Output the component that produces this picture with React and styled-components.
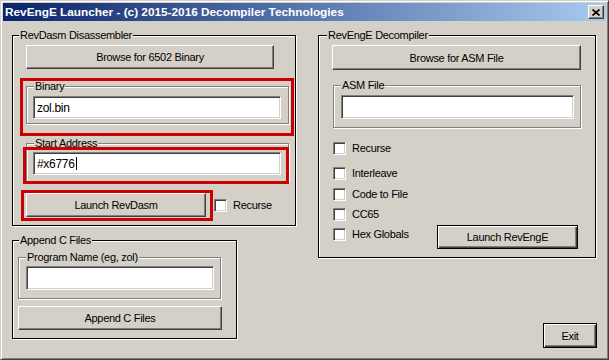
import React from 'react';
import styled, { createGlobalStyle } from 'styled-components';

const GlobalStyle = createGlobalStyle`
  html, body {
    margin: 0;
    padding: 0;
    background: #d4d0c8;
  }
  body {
    font-family: "Liberation Sans", Arial, sans-serif;
    font-size: 11px;
    letter-spacing: -0.3px;
    color: #000;
  }
`;

const Window = styled.div`
  box-sizing: border-box;
  width: 609px;
  height: 360px;
  padding: 2px;
  background: #d4d0c8;
  border: 1px solid;
  border-color: #d4d0c8 #404040 #404040 #d4d0c8;
  box-shadow: inset 1px 1px #fff, inset -1px -1px #808080;
  display: flex;
  flex-direction: column;
`;

const TitleBar = styled.div`
  height: 18px;
  padding: 0 2px;
  display: flex;
  align-items: center;
  justify-content: space-between;
  background: linear-gradient(to right, #0a246a, #a6caf0);
  color: #fff;
  font-size: 11.8px;
  font-weight: bold;
  letter-spacing: 0;
`;

const CloseButton = styled.div`
  box-sizing: border-box;
  width: 16px;
  height: 14px;
  display: flex;
  align-items: center;
  justify-content: center;
  background: #d4d0c8;
  border: 1px solid;
  border-color: #fff #404040 #404040 #fff;
  box-shadow: inset -1px -1px #808080;
`;

const Body = styled.div`
  flex: 1;
  display: flex;
  padding: 8px 0 0 9px;
  gap: 22px;
`;

const Column = styled.div`
  display: flex;
  flex-direction: column;
  align-items: flex-start;
  width: ${p => p.$w}px;
`;

const Group = styled.fieldset`
  box-sizing: border-box;
  margin: ${p => p.$m || '0'};
  padding: 0;
  min-width: 0;
  width: ${p => p.$w}px;
  height: ${p => p.$h}px;
  border: 1px solid ${p => (p.$inner ? '#808080' : '#000')};
  box-shadow: inset 1px 1px #fff, 1px 1px #fff;
  display: flex;
  flex-direction: column;
  align-items: flex-start;
`;

const Legend = styled.legend`
  margin-left: ${p => p.$x}px;
  padding: 0 1px;
  height: ${p => p.$lh}px;
  line-height: ${p => p.$lh}px;
  background: #d4d0c8;
`;

const Button = styled.button`
  box-sizing: border-box;
  margin: ${p => p.$m || '0'};
  padding: 0;
  width: ${p => p.$w}px;
  height: ${p => p.$h || 24}px;
  font: inherit;
  letter-spacing: inherit;
  color: #000;
  background: #d4d0c8;
  border: 1px solid;
  border-color: ${p => (p.$default ? '#000' : '#fff #404040 #404040 #fff')};
  box-shadow: ${p =>
    p.$default
      ? 'inset 1px 1px #fff, inset -1px -1px #404040, inset -2px -2px #808080'
      : 'inset -1px -1px #808080'};
`;

const Field = styled.div`
  box-sizing: border-box;
  margin: ${p => p.$m || '0'};
  width: ${p => p.$w}px;
  height: ${p => p.$h || 23}px;
  padding: 0 3px;
  display: flex;
  align-items: center;
  background: #fff;
  border: 1px solid;
  border-color: #808080 #fff #fff #808080;
  box-shadow: inset 1px 1px #404040, inset -1px -1px #d4d0c8;
  font-size: 12px;
`;

const Caret = styled.span`
  display: inline-block;
  width: 1px;
  height: 13px;
  margin-left: 1px;
  background: #000;
`;

const Highlight = styled.div`
  box-sizing: border-box;
  margin: ${p => p.$m || '0'};
  width: ${p => p.$w}px;
  height: ${p => p.$h}px;
  border: 3px solid #cc0000;
  display: flex;
  flex-direction: column;
  align-items: flex-start;
`;

const Row = styled.div`
  display: flex;
  align-items: ${p => p.$align || 'center'};
  margin: ${p => p.$m || '0'};
  width: ${p => (p.$w ? `${p.$w}px` : 'auto')};
`;

const CheckBox = styled.span`
  box-sizing: border-box;
  flex: none;
  width: 13px;
  height: 13px;
  margin: ${p => p.$m || '0'};
  background: #fff;
  border: 1px solid;
  border-color: #808080 #fff #fff #808080;
  box-shadow: inset 1px 1px #404040, inset -1px -1px #d4d0c8;
`;

const CheckLabel = styled.span`
  margin: ${p => p.$m || '0 0 0 6px'};
  line-height: 13px;
`;

const Check = ({ label, m }) => (
  <Row $m={m}>
    <CheckBox />
    <CheckLabel>{label}</CheckLabel>
  </Row>
);

export default function App() {
  return (
    <Window>
      <GlobalStyle />
      <TitleBar>
        <span>RevEngE Launcher - (c) 2015-2016 Decompiler Technologies</span>
        <CloseButton>
          <svg width="8" height="7" viewBox="0 0 8 7">
            <path d="M0.5 0.5 L7.5 6.5 M7.5 0.5 L0.5 6.5" stroke="#000" strokeWidth="1.6" />
          </svg>
        </CloseButton>
      </TitleBar>
      <Body>
        <Column $w={284}>
          <Group $w={284} $h={197}>
            <Legend $x={6} $lh={13}>RevDasm Disassembler</Legend>
            <Button $w={248} $m="3px 0 0 13px">Browse for 6502 Binary</Button>
            <Highlight $w={274} $h={58} $m="9px 0 0 7px">
              <Group $inner $w={263} $h={43} $m="0 0 0 3px">
                <Legend $x={7} $lh={11}>Binary</Legend>
                <Field $w={248} $m="4px 0 0 6px">zol.bin</Field>
              </Group>
            </Highlight>
            <Group $inner $w={263} $h={44} $m="2px 0 0 13px">
              <Legend $x={7} $lh={11}>Start Address</Legend>
              <Highlight $w={266} $h={37} $m="-2px 0 0 -4px">
                <Field $w={248} $m="2px 0 0 7px">
                  #x6776<Caret />
                </Field>
              </Highlight>
            </Group>
            <Row $m="8px 0 0 8px">
              <Highlight $w={192} $h={31}>
                <Button $w={180} $m="0 0 0 2px">Launch RevDasm</Button>
              </Highlight>
              <CheckBox $m="0 0 0 1px" />
              <CheckLabel>Recurse</CheckLabel>
            </Row>
          </Group>

          <Group $w={225} $h={105} $m="8px 0 0 0">
            <Legend $x={6} $lh={13}>Append C Files</Legend>
            <Group $inner $w={203} $h={47} $m="5px 0 0 5px">
              <Legend $x={7} $lh={11}>Program Name (eg, zol)</Legend>
              <Field $w={188} $h={24} $m="3px 0 0 7px" />
            </Group>
            <Button $w={204} $m="7px 0 0 5px">Append C Files</Button>
          </Group>
        </Column>

        <Column $w={279}>
          <Group $w={278} $h={229}>
            <Legend $x={8} $lh={13}>RevEngE Decompiler</Legend>
            <Button $w={249} $h={25} $m="3px 0 0 13px">Browse for ASM File</Button>
            <Group $inner $w={248} $h={48} $m="10px 0 0 14px">
              <Legend $x={7} $lh={11}>ASM File</Legend>
              <Field $w={233} $h={24} $m="4px 0 0 7px" />
            </Group>
            <Check label="Recurse" m="14px 0 0 14px" />
            <Check label="Interleave" m="12px 0 0 14px" />
            <Check label="Code to File" m="8px 0 0 14px" />
            <Check label="CC65" m="7px 0 0 14px" />
            <Row $align="flex-start" $w={245} $m="4px 0 0 14px">
              <CheckBox $m="3px 0 0 0" />
              <CheckLabel $m="3px 0 0 6px">Hex Globals</CheckLabel>
              <Button $default $w={141} $m="0 0 0 auto">Launch RevEngE</Button>
            </Row>
          </Group>
          <Button $default $w={54} $h={25} $m="65px 0 0 auto">Exit</Button>
        </Column>
      </Body>
    </Window>
  );
}
